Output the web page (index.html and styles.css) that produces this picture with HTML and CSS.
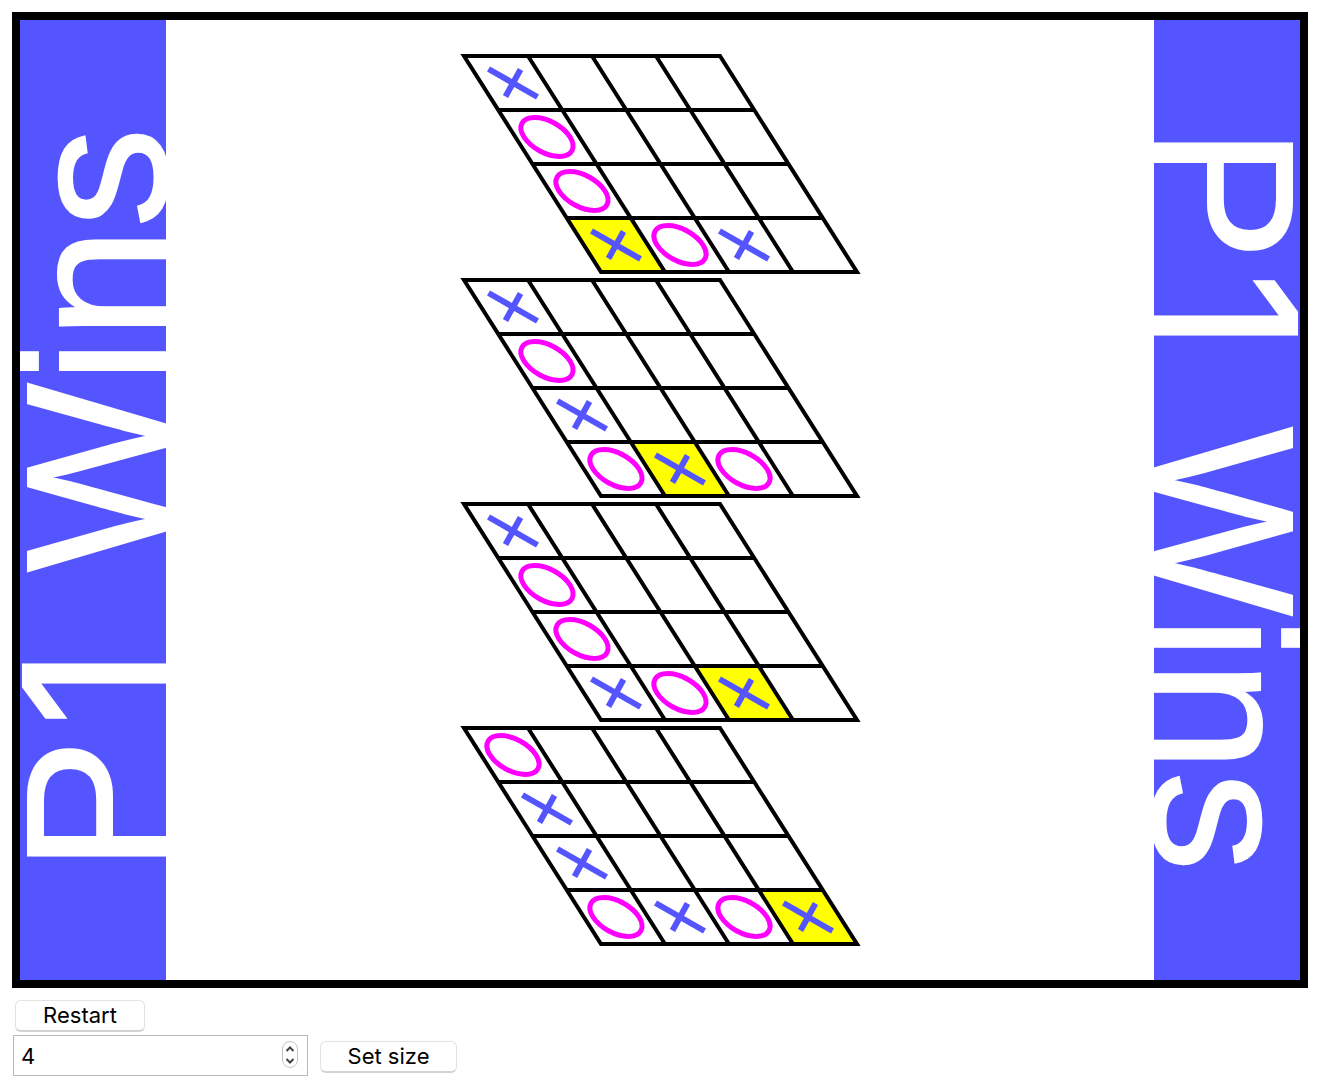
FILE: index.html
```html
<!DOCTYPE html>
<html lang="en">
<head>
<meta charset="utf-8">
<meta name="viewport" content="width=device-width, initial-scale=1">
<title>3D Tic Tac Toe</title>
<link rel="stylesheet" href="styles.css">
</head>
<body>
<main class="game">
  <svg class="board" viewBox="0 0 1280 960" role="img" aria-label="Player 1 wins">
    <defs>
      <path id="x" class="mark-x" d="M-24.500 -14L24.500 14M7.500 -13.500L-7.500 13.500"/>
      <ellipse id="o" class="mark-o" rx="28.5" ry="15.7" transform="rotate(28.8)"/>
      <path id="cell" class="win" d="M-49 -27H15L49 27H-15Z"/>
      <g id="grid">
        <path class="line" d="M34 54H290M69 108H325M103 162H359"/>
        <path class="line" d="M64 0L201 216M128 0L265 216M192 0L329 216"/>
        <path class="edge" d="M0 0H256L393 216H137Z"/>
      </g>
    </defs>

    <rect class="banner" width="146" height="960"/>
    <text class="banner-text" transform="translate(146 852) rotate(-90)">P<tspan class="digit" x="145">1</tspan> <tspan x="300">Wins</tspan></text>
    <rect class="banner" x="1134" width="146" height="960"/>
    <text class="banner-text" transform="translate(1134 107) rotate(90)">P<tspan class="digit" x="145">1</tspan> <tspan x="300">Wins</tspan></text>

    <g transform="translate(444 36)">
      <use href="#cell" x="152" y="189"/>
      <use href="#grid"/>
      <use href="#x" x="49" y="27"/>
      <use href="#o" transform="translate(83 81)"/>
      <use href="#o" transform="translate(118 135)"/>
      <use href="#x" x="152" y="189"/>
      <use href="#o" transform="translate(216 189)"/>
      <use href="#x" x="280" y="189"/>
    </g>
    <g transform="translate(444 260)">
      <use href="#cell" x="216" y="189"/>
      <use href="#grid"/>
      <use href="#x" x="49" y="27"/>
      <use href="#o" transform="translate(83 81)"/>
      <use href="#x" x="118" y="135"/>
      <use href="#o" transform="translate(152 189)"/>
      <use href="#x" x="216" y="189"/>
      <use href="#o" transform="translate(280 189)"/>
    </g>
    <g transform="translate(444 484)">
      <use href="#cell" x="280" y="189"/>
      <use href="#grid"/>
      <use href="#x" x="49" y="27"/>
      <use href="#o" transform="translate(83 81)"/>
      <use href="#o" transform="translate(118 135)"/>
      <use href="#x" x="152" y="189"/>
      <use href="#o" transform="translate(216 189)"/>
      <use href="#x" x="280" y="189"/>
    </g>
    <g transform="translate(444 708)">
      <use href="#cell" x="344" y="189"/>
      <use href="#grid"/>
      <use href="#o" transform="translate(49 27)"/>
      <use href="#x" x="83" y="81"/>
      <use href="#x" x="118" y="135"/>
      <use href="#o" transform="translate(152 189)"/>
      <use href="#x" x="216" y="189"/>
      <use href="#o" transform="translate(280 189)"/>
      <use href="#x" x="344" y="189"/>
    </g>
  </svg>

  <div class="controls">
    <button class="button restart" type="button">Restart</button>
    <form class="size-form">
      <div class="size-field">
        <input class="size-input" type="number" value="4" min="1" aria-label="Board size">
        <svg class="stepper" viewBox="0 0 16 28" aria-hidden="true">
          <rect class="stepper-body" x="0.5" y="0.5" width="15" height="26" rx="7.5"/>
          <path class="stepper-arrows" d="M4.500 10L8 6.500L11.500 10M4.500 18L8 21.500L11.500 18"/>
        </svg>
      </div>
      <button class="button set-size" type="submit">Set size</button>
    </form>
  </div>
</main>
</body>
</html>
```
FILE: styles.css
```css
* {
  box-sizing: border-box;
}

body {
  margin: 0;
  background: #fff;
  color: #000;
  font-family: Inter, "Liberation Sans", sans-serif;
}

.game {
  padding: 12px 32px 12px 12px;
}

.board {
  display: block;
  width: 100%;
  border: 8px solid #000;
}

.banner {
  fill: #5555ff;
}

.banner-text {
  fill: #fff;
  stroke: #fff;
  stroke-width: 2px;
  font-family: "Liberation Sans", Arial, sans-serif;
  font-size: 200px;
}

.digit {
  font-family: Inter, Arial, sans-serif;
  font-size: 196px;
}

.line,
.edge {
  fill: none;
  stroke: #000;
  stroke-width: 4px;
}

.win {
  fill: #ff0;
}

.mark-x,
.mark-o {
  fill: none;
  stroke: #5555ff;
  stroke-width: 6px;
}

.mark-o {
  stroke: #f0f;
  stroke-width: 5px;
}

.controls {
  display: flex;
  flex-direction: column;
  align-items: flex-start;
  gap: 3px;
  padding-top: 12px;
}

.button {
  height: 32px;
  padding: 0 0 2px;
  border: 1px solid #e2e2e2;
  border-bottom: 2px solid #d2d2d2;
  border-radius: 6px;
  background: #fff;
  color: #000;
  font: inherit;
  font-size: 22px;
  line-height: 28px;
}

.restart {
  width: 130px;
  margin-left: 3px;
}

.set-size {
  width: 137px;
  margin-top: 2px;
}

.size-form {
  display: flex;
  align-items: center;
  gap: 12px;
  padding-left: 1px;
}

.size-field {
  position: relative;
  width: 295px;
}

.size-input {
  display: block;
  width: 100%;
  height: 41px;
  padding: 0 40px 0 7px;
  border: 1px solid #b8b8b8;
  border-radius: 0;
  background: #fff;
  color: #000;
  font: inherit;
  font-size: 22px;
  appearance: textfield;
}

.size-input::-webkit-inner-spin-button {
  appearance: none;
  margin: 0;
}

.stepper {
  position: absolute;
  top: 6px;
  right: 10px;
  width: 16px;
  height: 28px;
  pointer-events: none;
}

.stepper-body {
  fill: #fff;
  stroke: #c4c4c4;
}

.stepper-arrows {
  fill: none;
  stroke: #444;
  stroke-width: 2px;
}
```
